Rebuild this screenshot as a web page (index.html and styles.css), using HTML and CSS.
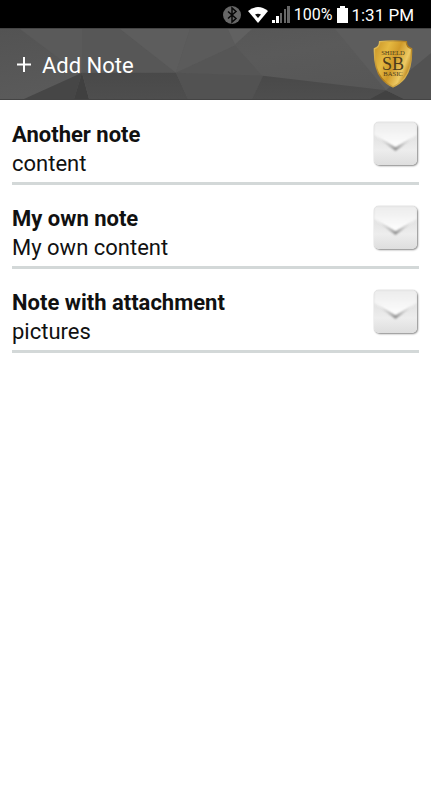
FILE: index.html
```html
<!DOCTYPE html>
<html lang="en">
<head>
<meta charset="utf-8">
<meta name="viewport" content="width=device-width, initial-scale=1">
<title>Notes</title>
<link rel="stylesheet" href="styles.css">
</head>
<body>
<div class="status">
  <svg width="18" height="18" viewBox="0 0 18 18" aria-hidden="true"><circle cx="9" cy="9" r="9" fill="#666"/><path d="M5 5.500l8 7L9 16V2l4 3.500-8 7" fill="none" stroke="#080808" stroke-width="1.500"/></svg>
  <svg class="wifi" width="22" height="18" viewBox="0 0 22 18" aria-hidden="true"><path d="M1 5Q11-3 21 5L11 17z" fill="#fff"/><path d="M8 8.500Q11 7 14 8.500L11 12z" fill="#111"/></svg>
  <svg class="signal" width="18" height="18" viewBox="0 0 18 18" aria-hidden="true"><path d="M0 14h3v3H0zM4 10h3v7H4z" fill="#fff"/><path d="M8 7h2v10H8zM12 3h2v14h-2zM15 0h3v17h-3z" fill="#666"/></svg>
  <span class="percent">100%</span>
  <svg class="battery" width="11" height="18" viewBox="0 0 11 18" aria-hidden="true"><path d="M3 0h5v2h3v15H0V2h3z" fill="#fff"/></svg>
  <span>1:31 PM</span>
</div>
<header class="bar">
  <svg class="facets" viewBox="0 0 431 72" preserveAspectRatio="none" aria-hidden="true">
    <defs>
      <linearGradient id="base" x2="1" y2="1"><stop stop-color="#535353"/><stop offset=".5" stop-color="#5a5a5a"/><stop offset="1" stop-color="#555"/></linearGradient>
      <linearGradient id="dark" x2="0" y2="1"><stop stop-color="#494949"/><stop offset="1" stop-color="#4e4e4e"/></linearGradient>
    </defs>
    <path d="M0 0h431v72H0z" fill="url(#base)"/>
    <path d="M20 0h62v48z" fill="#5a5a5a"/>
    <path d="M82 0h38l56 45-94-1z" fill="#575757"/>
    <path d="M120 0h70l-14 45z" fill="#5d5d5d"/>
    <path d="M190 0h42l3 17-59 28z" fill="#5b5b5b"/>
    <path d="M228 0h24l-17 16z" fill="#616161"/>
    <path d="M235 17l-59 28 87 4z" fill="#565656"/>
    <path d="M24 72l58-27-8 27z" fill="#464646"/>
    <path d="M82 45l-8 27h15z" fill="#404040"/>
    <path d="M82 45h94l12 27H89z" fill="url(#dark)"/>
    <path d="M176 45l87 3-11 24h-64z" fill="#525252"/>
    <path d="M263 48l123 15-16 9H252z" fill="url(#dark)"/>
    <path d="M386 63l18 9h-34z" fill="#424242"/>
    <path d="M335 0h96v25l-45 38z" fill="#5d5d5d"/>
    <path d="M431 25v47h-27l-18-9z" fill="#525252"/>
  </svg>
  <button class="add" type="button">
    <svg width="16" height="16" viewBox="0 0 16 16" aria-hidden="true"><path d="M8 0v15M1 7.500h14" stroke="#fff" stroke-width="2"/></svg>
    <span>Add Note</span>
  </button>
  <svg class="shield" width="40" height="48" viewBox="0 0 42 50" role="img" aria-label="Shield Basic">
    <defs><linearGradient id="gold" x2="1" y2=".5"><stop stop-color="#c69025"/><stop offset=".35" stop-color="#e5b941"/><stop offset=".6" stop-color="#d09a29"/><stop offset=".85" stop-color="#edca64"/><stop offset="1" stop-color="#bd861e"/></linearGradient>
    <linearGradient id="rim" x2="1" y2="1"><stop stop-color="#e9c760"/><stop offset=".5" stop-color="#a97518"/><stop offset="1" stop-color="#f3d56d"/></linearGradient></defs>
    <path d="M7 1.500Q21 .3 35 1.500Q35 7.500 40.500 9Q41 30 33 40Q28 46 21 49Q14 46 9 40Q1 30 1.500 9Q7 7.500 7 1.500z" fill="url(#gold)" stroke="url(#rim)" stroke-width="1.500"/>
    <g fill="#4c3b1c" text-anchor="middle"><text x="21" y="16" font-size="7">SHIELD</text><text x="21" y="31" font-size="19">SB</text><text x="21" y="38" font-size="7">BASIC</text></g>
  </svg>
</header>
<svg class="defs" width="0" height="0" aria-hidden="true">
  <defs>
    <linearGradient id="fold" x2="0" y2="1"><stop stop-color="#ececec"/><stop offset=".5" stop-color="#f5f5f5"/><stop offset="1" stop-color="#fff"/></linearGradient>
    <linearGradient id="edge" x2="1"><stop stop-color="#aaa" stop-opacity="0"/><stop offset=".5" stop-color="#8c8c8c"/><stop offset="1" stop-color="#aaa" stop-opacity="0"/></linearGradient>
    <filter id="soft" x="-20%" y="-50%" width="140%" height="200%"><feGaussianBlur stdDeviation=".8"/></filter>
    <symbol id="chevron" viewBox="0 0 43 43">
      <path d="M0 13L21.500 26 43 13V0H0z" fill="url(#fold)" filter="url(#soft)"/>
      <path d="M2 14l19.500 11.500L41 14l-19.500 15z" fill="url(#edge)" filter="url(#soft)"/>
    </symbol>
  </defs>
</svg>
<main>
  <ul class="notes">
    <li class="note">
      <div class="text"><h2>Another note</h2><p>content</p></div>
      <button class="open" type="button" aria-label="Open Another note"><svg aria-hidden="true"><use href="#chevron"/></svg></button>
    </li>
    <li class="note">
      <div class="text"><h2>My own note</h2><p>My own content</p></div>
      <button class="open" type="button" aria-label="Open My own note"><svg aria-hidden="true"><use href="#chevron"/></svg></button>
    </li>
    <li class="note">
      <div class="text"><h2>Note with attachment</h2><p>pictures</p></div>
      <button class="open" type="button" aria-label="Open Note with attachment"><svg aria-hidden="true"><use href="#chevron"/></svg></button>
    </li>
  </ul>
</main>
</body>
</html>
```
FILE: styles.css
```css
* { box-sizing: border-box; }
body {
  margin: 0;
  background: #fff;
  color: #111;
  font-family: Roboto, "Liberation Sans", sans-serif;
  font-size: 22px;
  line-height: 29px;
}
.status {
  display: flex;
  align-items: center;
  justify-content: flex-end;
  height: 28px;
  padding: 2px 17px 0 0;
  background: #000;
  color: #fff;
  font-size: 17px;
  line-height: 26px;
}
.wifi { margin-left: 6px; }
.signal { margin-left: 3px; }
.percent { margin-left: 4px; font-size: 16px; }
.battery { margin: 0 3px 0 5px; }
.bar {
  position: relative;
  display: flex;
  align-items: center;
  justify-content: space-between;
  height: 72px;
  padding: 0 18px 0 16px;
  border-top: 1px solid #444;
  border-bottom: 1px solid #444;
}
.facets {
  position: absolute;
  inset: 0;
  width: 100%;
  height: 100%;
}
.add {
  position: relative;
  display: flex;
  align-items: center;
  gap: 10px;
  padding: 2px 0 0;
  border: 0;
  background: none;
  color: #fff;
  font: inherit;
}
.shield { position: relative; font-family: "Liberation Serif", serif; }
.defs { display: block; }
.notes {
  margin: 0;
  padding: 1px 12px 0;
  list-style: none;
}
.note {
  display: flex;
  align-items: flex-start;
  justify-content: space-between;
  padding: 19px 0 4px;
  border-bottom: 3px solid #d3d8d8;
}
.note h2, .note p { margin: 0; font-size: 22px; }
.note h2 { font-weight: 700; }
.open {
  width: 43px;
  height: 43px;
  margin: 2px 2px 0 0;
  padding: 0;
  border: 0;
  border-radius: 5px;
  overflow: hidden;
  background: linear-gradient(#d8d8d8, #ededed 65%, #dedede);
  box-shadow: 1px 1px 2px #888, 0 0 1px #aaa;
}
.open svg { display: block; width: 43px; height: 43px; }
```
